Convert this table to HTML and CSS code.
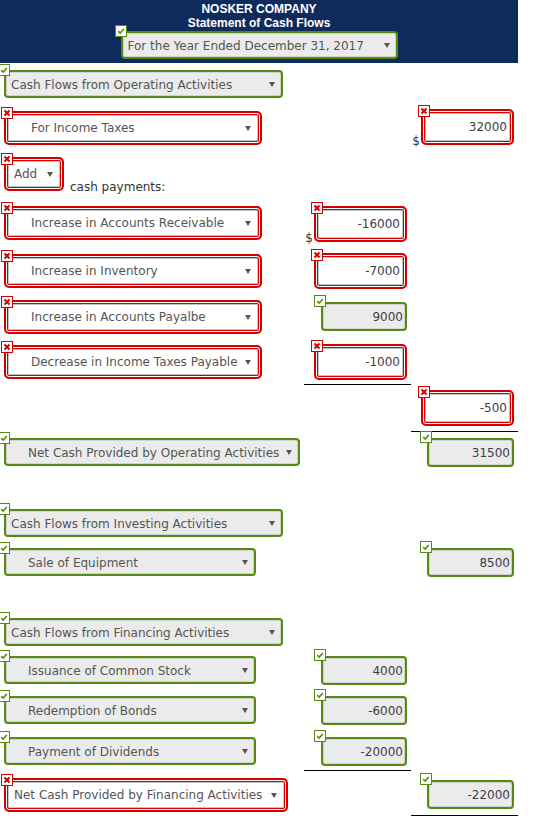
FILE: index.html
```html
<!DOCTYPE html>
<html>
<head>
<meta charset="utf-8">
<link rel="stylesheet" href="styles.css">
</head>
<body>
<div class="sheet">
  <header class="head">
    <div class="title">NOSKER COMPANY</div>
    <div class="title">Statement of Cash Flows</div>
    <div class="dd ok year">
      <span class="badge g"><svg viewBox="0 0 10 10"><polyline points="2.2,5.2 4.2,7 7.8,3" /></svg></span>
      <span class="lbl">For the Year Ended December 31, 2017</span><span class="caret"></span>
    </div>
  </header>

  <div class="row mt7">
    <div class="c1"><div class="dd ok w279"><span class="badge g"><svg viewBox="0 0 10 10"><polyline points="2.2,5.2 4.2,7 7.8,3" /></svg></span><span class="lbl">Cash Flows from Operating Activities</span><span class="caret"></span></div></div>
  </div>

  <div class="row mt11">
    <div class="c1"><div class="dd bad ind w258 off2"><span class="badge r"><svg viewBox="0 0 10 10"><path d="M2.5 2.5L7.5 7.5M7.5 2.5L2.5 7.5" /></svg></span><span class="lbl">For Income Taxes</span><span class="caret"></span></div></div>
    <div class="c3"><span class="dollar">$</span><div class="inp bad"><span class="badge r"><svg viewBox="0 0 10 10"><path d="M2.5 2.5L7.5 7.5M7.5 2.5L2.5 7.5" /></svg></span>32000</div></div>
  </div>

  <div class="row mt12">
    <div class="c1 addrow"><div class="dd bad w60"><span class="badge r"><svg viewBox="0 0 10 10"><path d="M2.5 2.5L7.5 7.5M7.5 2.5L2.5 7.5" /></svg></span><span class="lbl">Add</span><span class="caret"></span></div><span class="note">cash payments:</span></div>
  </div>

  <div class="row mt15">
    <div class="c1"><div class="dd bad ind w258"><span class="badge r"><svg viewBox="0 0 10 10"><path d="M2.5 2.5L7.5 7.5M7.5 2.5L2.5 7.5" /></svg></span><span class="lbl">Increase in Accounts Receivable</span><span class="caret"></span></div></div>
    <div class="c2"><span class="dollar">$</span><div class="inp bad"><span class="badge r"><svg viewBox="0 0 10 10"><path d="M2.5 2.5L7.5 7.5M7.5 2.5L2.5 7.5" /></svg></span>-16000</div></div>
  </div>

  <div class="row mt11">
    <div class="c1"><div class="dd bad ind w258 off1"><span class="badge r"><svg viewBox="0 0 10 10"><path d="M2.5 2.5L7.5 7.5M7.5 2.5L2.5 7.5" /></svg></span><span class="lbl">Increase in Inventory</span><span class="caret"></span></div></div>
    <div class="c2"><div class="inp bad"><span class="badge r"><svg viewBox="0 0 10 10"><path d="M2.5 2.5L7.5 7.5M7.5 2.5L2.5 7.5" /></svg></span>-7000</div></div>
  </div>

  <div class="row mt11">
    <div class="c1"><div class="dd bad ind w258"><span class="badge r"><svg viewBox="0 0 10 10"><path d="M2.5 2.5L7.5 7.5M7.5 2.5L2.5 7.5" /></svg></span><span class="lbl">Increase in Accounts Payalbe</span><span class="caret"></span></div></div>
    <div class="c2"><div class="inp ok off2"><span class="badge g"><svg viewBox="0 0 10 10"><polyline points="2.2,5.2 4.2,7 7.8,3" /></svg></span>9000</div></div>
  </div>

  <div class="row mt10">
    <div class="c1"><div class="dd bad ind w258 off1"><span class="badge r"><svg viewBox="0 0 10 10"><path d="M2.5 2.5L7.5 7.5M7.5 2.5L2.5 7.5" /></svg></span><span class="lbl">Decrease in Income Taxes Payable</span><span class="caret"></span></div></div>
    <div class="c2"><div class="inp bad"><span class="badge r"><svg viewBox="0 0 10 10"><path d="M2.5 2.5L7.5 7.5M7.5 2.5L2.5 7.5" /></svg></span>-1000</div></div>
  </div>
  <div class="rule col2 mt4"></div>

  <div class="row mt5">
    <div class="c3"><div class="inp bad"><span class="badge r"><svg viewBox="0 0 10 10"><path d="M2.5 2.5L7.5 7.5M7.5 2.5L2.5 7.5" /></svg></span>-500</div></div>
  </div>
  <div class="rule col3 mt5"></div>

  <div class="row mt6">
    <div class="c1"><div class="dd ok ind w296"><span class="badge g"><svg viewBox="0 0 10 10"><polyline points="2.2,5.2 4.2,7 7.8,3" /></svg></span><span class="lbl">Net Cash Provided by Operating Activities</span><span class="caret"></span></div></div>
    <div class="c3"><div class="inp ok"><span class="badge g"><svg viewBox="0 0 10 10"><polyline points="2.2,5.2 4.2,7 7.8,3" /></svg></span>31500</div></div>
  </div>

  <div class="row mt42">
    <div class="c1"><div class="dd ok w279"><span class="badge g"><svg viewBox="0 0 10 10"><polyline points="2.2,5.2 4.2,7 7.8,3" /></svg></span><span class="lbl">Cash Flows from Investing Activities</span><span class="caret"></span></div></div>
  </div>

  <div class="row mt11">
    <div class="c1"><div class="dd ok ind w252"><span class="badge g"><svg viewBox="0 0 10 10"><polyline points="2.2,5.2 4.2,7 7.8,3" /></svg></span><span class="lbl">Sale of Equipment</span><span class="caret"></span></div></div>
    <div class="c3"><div class="inp ok"><span class="badge g"><svg viewBox="0 0 10 10"><polyline points="2.2,5.2 4.2,7 7.8,3" /></svg></span>8500</div></div>
  </div>

  <div class="row mt41">
    <div class="c1"><div class="dd ok w279"><span class="badge g"><svg viewBox="0 0 10 10"><polyline points="2.2,5.2 4.2,7 7.8,3" /></svg></span><span class="lbl">Cash Flows from Financing Activities</span><span class="caret"></span></div></div>
  </div>

  <div class="row mt10">
    <div class="c1"><div class="dd ok ind w252"><span class="badge g"><svg viewBox="0 0 10 10"><polyline points="2.2,5.2 4.2,7 7.8,3" /></svg></span><span class="lbl">Issuance of Common Stock</span><span class="caret"></span></div></div>
    <div class="c2"><div class="inp ok"><span class="badge g"><svg viewBox="0 0 10 10"><polyline points="2.2,5.2 4.2,7 7.8,3" /></svg></span>4000</div></div>
  </div>

  <div class="row mt11">
    <div class="c1"><div class="dd ok ind w252"><span class="badge g"><svg viewBox="0 0 10 10"><polyline points="2.2,5.2 4.2,7 7.8,3" /></svg></span><span class="lbl">Redemption of Bonds</span><span class="caret"></span></div></div>
    <div class="c2"><div class="inp ok"><span class="badge g"><svg viewBox="0 0 10 10"><polyline points="2.2,5.2 4.2,7 7.8,3" /></svg></span>-6000</div></div>
  </div>

  <div class="row mt12">
    <div class="c1"><div class="dd ok ind w252"><span class="badge g"><svg viewBox="0 0 10 10"><polyline points="2.2,5.2 4.2,7 7.8,3" /></svg></span><span class="lbl">Payment of Dividends</span><span class="caret"></span></div></div>
    <div class="c2"><div class="inp ok"><span class="badge g"><svg viewBox="0 0 10 10"><polyline points="2.2,5.2 4.2,7 7.8,3" /></svg></span>-20000</div></div>
  </div>
  <div class="rule col2 mt4"></div>

  <div class="row mt7">
    <div class="c1"><div class="dd bad w284"><span class="badge r"><svg viewBox="0 0 10 10"><path d="M2.5 2.5L7.5 7.5M7.5 2.5L2.5 7.5" /></svg></span><span class="lbl">Net Cash Provided by Financing Activities</span><span class="caret"></span></div></div>
    <div class="c3"><div class="inp ok off2"><span class="badge g"><svg viewBox="0 0 10 10"><polyline points="2.2,5.2 4.2,7 7.8,3" /></svg></span>-22000</div></div>
  </div>
  <div class="rule col3 mt3"></div>
</div>
</body>
</html>
```

FILE: styles.css
```css
* { box-sizing: border-box; }

body {
  margin: 0;
  background: #fff;
  font-family: "DejaVu Sans", Verdana, sans-serif;
  font-size: 12px;
  color: #555;
}

.sheet { width: 518px; }

/* header */
.head {
  height: 63px;
  background: #0f2b5b;
  padding-top: 2px;
  display: flex;
  flex-direction: column;
  align-items: center;
}
.title {
  font-family: "Liberation Sans", Arial, sans-serif;
  font-weight: bold;
  font-size: 12px;
  line-height: 14px;
  color: #fff;
}

/* rows */
.row {
  display: grid;
  grid-template-columns: 304px 103px 107px;
  align-items: start;
}
.c1 { grid-column: 1; padding-left: 4px; }
.c2, .c3 {
  display: flex;
  justify-content: flex-end;
  align-items: flex-end;
}
.c2 { grid-column: 2; }
.c3 { grid-column: 3; }

.addrow { display: flex; align-items: flex-end; }
.note {
  margin-left: 6px;
  margin-bottom: -2px;
  line-height: 12px;
  color: #333;
}

.dollar {
  line-height: 12px;
  color: #333;
  margin-right: 1px;
  margin-bottom: -2px;
}

/* rules */
.rule { height: 1px; background: #000; width: 107px; }
.rule.col2 { margin-left: 304px; }
.rule.col3 { margin-left: 411px; }

/* spacing */
.mt3 { margin-top: 3px; }
.mt4 { margin-top: 4px; }
.mt5 { margin-top: 5px; }
.mt6 { margin-top: 6px; }
.mt7 { margin-top: 7px; }
.mt10 { margin-top: 10px; }
.mt11 { margin-top: 11px; }
.mt12 { margin-top: 12px; }
.mt15 { margin-top: 15px; }
.mt41 { margin-top: 41px; }
.mt42 { margin-top: 42px; }
.off1 { margin-top: 1px; }
.off2 { margin-top: 2px; }

/* box states */
.ok {
  border: 2px solid #578a10;
  background: #ebebeb;
  box-shadow: inset 0 0 0 1px #d2d2d2;
  border-radius: 4px;
}
.bad {
  border: 2px solid #d40000;
  background: #fff;
  box-shadow: inset 0 0 0 1px #fff, inset 0 0 0 2px #d40000, inset 0 0 0 3px #c4c4c4;
  border-radius: 5px;
}

/* dropdowns */
.dd {
  position: relative;
  display: flex;
  align-items: center;
  white-space: nowrap;
}
.dd.ok { height: 28px; padding: 1px 6px 0 5px; }
.dd.bad { height: 34px; padding: 0 9px 0 8px; }
.dd.ok.ind { padding-left: 22px; }
.dd.bad.ind { padding-left: 25px; }
.dd .lbl { flex: 1; }
.caret {
  width: 0;
  height: 0;
  border-left: 3px solid transparent;
  border-right: 3px solid transparent;
  border-top: 5px solid #555;
}
.year { width: 277px; margin-top: 1px; padding-left: 6px; }
.w60 { width: 60px; }
.w252 { width: 252px; }
.w258 { width: 258px; }
.w279 { width: 279px; }
.w284 { width: 284px; }
.w296 { width: 296px; }

/* inputs */
.inp {
  position: relative;
  display: flex;
  align-items: center;
  justify-content: flex-end;
  color: #3d3d45;
}
.inp.bad { width: 93px; height: 36px; padding-right: 5px; }
.inp.ok { width: 86px; height: 29px; padding-right: 2px; padding-top: 1px; }
.c3 .inp.ok { width: 87px; }

/* badges */
.badge {
  position: absolute;
  width: 12px;
  height: 12px;
  background: #fff;
  border: 1px solid;
  display: block;
}
.badge svg { display: block; width: 10px; height: 10px; fill: none; }
.badge.g { border-color: #578a10; left: -8px; top: -8px; }
.badge.g svg { stroke: #578a10; stroke-width: 1.6; }
.badge.r { border-color: #d40000; left: -5px; top: -6px; }
.badge.r svg { stroke: #d40000; stroke-width: 2; }
.inp.ok .badge.g { left: -9px; top: -9px; }
```
